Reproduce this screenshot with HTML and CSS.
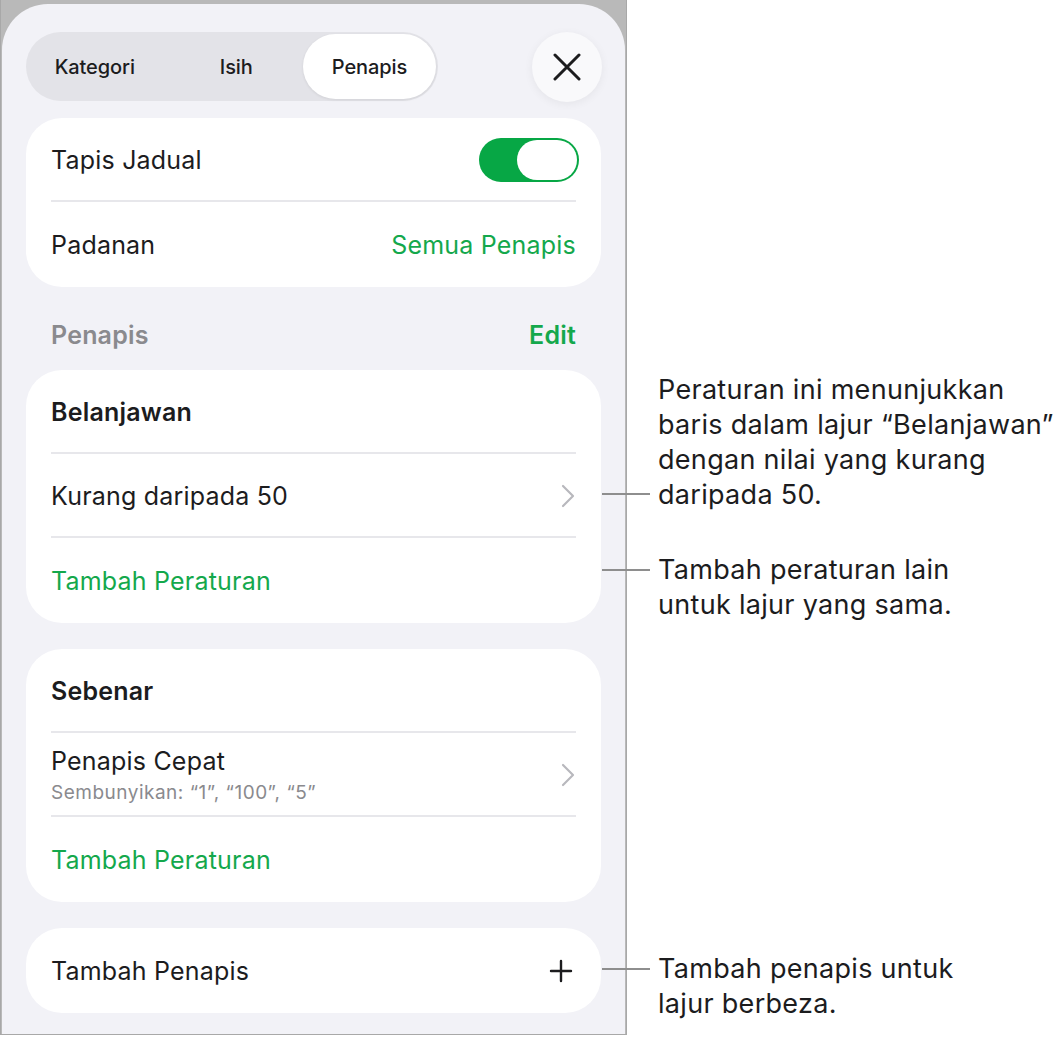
FILE: index.html
```html
<!DOCTYPE html>
<html lang="ms">
<head>
    <meta charset="UTF-8">
    <meta name="viewport" content="width=device-width, initial-scale=1.0">
    <title>Penapis</title>
    <link rel="stylesheet" href="styles.css">
</head>
<body>
    <div class="page">
        <div class="frame">
            <div class="sheet">
                <div class="top-bar">
                    <div class="segmented">
                        <span class="segment">Kategori</span>
                        <span class="segment">Isih</span>
                        <span class="segment selected">Penapis</span>
                    </div>
                    <button class="close-btn" aria-label="Tutup">
                        <svg width="28" height="28" viewBox="0 0 28 28">
                            <path d="M2 2 L26 26 M26 2 L2 26" stroke="#1c1c1e" stroke-width="3" stroke-linecap="round" fill="none"/>
                        </svg>
                    </button>
                </div>

                <div class="card">
                    <div class="row">
                        <span class="label">Tapis Jadual</span>
                        <span class="toggle"><span class="knob"></span></span>
                    </div>
                    <div class="row">
                        <span class="label">Padanan</span>
                        <span class="link">Semua Penapis</span>
                    </div>
                </div>

                <div class="section-head">
                    <span>Penapis</span>
                    <span class="edit">Edit</span>
                </div>

                <div class="card">
                    <div class="row">
                        <span class="label strong">Belanjawan</span>
                    </div>
                    <div class="row">
                        <span class="label">Kurang daripada 50</span>
                        <svg class="chevron" width="14" height="24" viewBox="0 0 14 24">
                            <path d="M2 2 L12 12 L2 22" stroke="#b8b8bd" stroke-width="2.2" stroke-linecap="round" stroke-linejoin="round" fill="none"/>
                        </svg>
                        <div class="callout callout-rule">
                            <span class="callout-line"></span>
                            <p>Peraturan ini menunjukkan<br>baris dalam lajur “Belanjawan”<br>dengan nilai yang kurang<br>daripada 50.</p>
                        </div>
                    </div>
                    <div class="row">
                        <span class="link">Tambah Peraturan</span>
                        <div class="callout callout-add">
                            <span class="callout-line"></span>
                            <p>Tambah peraturan lain<br>untuk lajur yang sama.</p>
                        </div>
                    </div>
                </div>

                <div class="card">
                    <div class="row">
                        <span class="label strong">Sebenar</span>
                    </div>
                    <div class="row">
                        <div class="stack">
                            <span class="label">Penapis Cepat</span>
                            <span class="sub">Sembunyikan: “1”, “100”, “5”</span>
                        </div>
                        <svg class="chevron" width="14" height="24" viewBox="0 0 14 24">
                            <path d="M2 2 L12 12 L2 22" stroke="#b8b8bd" stroke-width="2.2" stroke-linecap="round" stroke-linejoin="round" fill="none"/>
                        </svg>
                    </div>
                    <div class="row">
                        <span class="link">Tambah Peraturan</span>
                    </div>
                </div>

                <div class="card">
                    <div class="row">
                        <span class="label">Tambah Penapis</span>
                        <svg class="plus" width="24" height="24" viewBox="0 0 24 24">
                            <path d="M12 2 V22 M2 12 H22" stroke="#1c1c1e" stroke-width="2.4" stroke-linecap="round" fill="none"/>
                        </svg>
                        <div class="callout callout-new">
                            <span class="callout-line"></span>
                            <p>Tambah penapis untuk<br>lajur berbeza.</p>
                        </div>
                    </div>
                </div>
            </div>
        </div>
    </div>
</body>
</html>
```

FILE: styles.css
```css
html, body {
    margin: 0;
    background: white;
}
body {
    font-family: Inter, "Noto Sans", sans-serif;
    color: #1c1c1e;
}
.page {
    width: 1064px;
    height: 1037px;
    overflow: hidden;
}
.frame {
    width: 623px;
    height: 1030px;
    padding: 4px 1px 0 1px;
    background: #b9b9b9;
    border: 1px solid #a8a8a8;
    border-top: none;
}
.sheet {
    height: 100%;
    box-sizing: border-box;
    background: #f2f2f7;
    border-radius: 46px 46px 0 0;
    padding: 28px 24px 0 24px;
}
.top-bar {
    display: flex;
    justify-content: space-between;
    align-items: center;
    height: 69px;
    margin-bottom: 17px;
    margin-right: -1px;
}
.segmented {
    display: flex;
    align-items: center;
    width: 412px;
    height: 69px;
    box-sizing: border-box;
    padding: 2px;
    border-radius: 35px;
    background: #e3e3e8;
}
.segment {
    flex: 1;
    height: 65px;
    display: flex;
    align-items: center;
    justify-content: center;
    font-size: 20px;
    font-weight: 500;
    letter-spacing: -0.1px;
}
.segment:first-child {
    padding-right: 8px;
}
.segment.selected {
    flex: 0 0 133px;
    background: white;
    border-radius: 33px;
    box-shadow: 0 1px 3px rgba(0,0,0,0.08);
}
.close-btn {
    width: 70px;
    height: 70px;
    border: none;
    border-radius: 50%;
    background: #f9f9fb;
    box-shadow: 0 2px 10px rgba(0,0,0,0.06);
    display: flex;
    align-items: center;
    justify-content: center;
    padding: 0;
}
.card {
    background: white;
    border-radius: 36px;
    padding: 0 25px 1px 25px;
    margin-bottom: 26px;
}
.row {
    position: relative;
    display: flex;
    align-items: center;
    justify-content: space-between;
    height: 84px;
    box-sizing: border-box;
    padding-top: 2px;
    border-bottom: 2px solid #e7e7eb;
    font-size: 25px;
    letter-spacing: 0.2px;
}
.row:last-child {
    border-bottom: none;
}
.strong {
    font-weight: 600;
}
.link {
    color: #14a84c;
}
.stack {
    display: flex;
    flex-direction: column;
}
.sub {
    font-size: 19px;
    color: #8a8a8e;
    margin-top: 5px;
    letter-spacing: 0.5px;
}
.chevron {
    margin-right: 1px;
}
.plus {
    margin-right: 3px;
}
.toggle {
    width: 100px;
    height: 44px;
    border-radius: 22px;
    background: #07a745;
    box-sizing: border-box;
    padding: 2px;
    display: flex;
    justify-content: flex-end;
    margin-right: -3px;
}
.knob {
    width: 60px;
    height: 40px;
    border-radius: 20px;
    background: white;
}
.section-head {
    display: flex;
    justify-content: space-between;
    align-items: center;
    height: 70px;
    margin-top: -13px;
    padding: 0 25px;
    font-size: 25px;
    font-weight: 600;
    color: #8a8a8e;
    letter-spacing: 0.2px;
}
.section-head .edit {
    color: #14a84c;
}

/* annotations hanging off the right edge of a row */
.callout {
    position: absolute;
    left: calc(100% + 26px);
    display: flex;
    align-items: flex-start;
    white-space: nowrap;
}
.callout p {
    margin: 0;
    font-size: 27px;
    line-height: 35px;
    letter-spacing: 0.3px;
    color: #1c1c1e;
}
.callout-line {
    flex: 0 0 48px;
    height: 2px;
    background: #8e8e8e;
    margin-right: 8px;
}
.callout-rule {
    top: -82px;
    align-items: flex-end;
}
.callout-rule .callout-line {
    margin-bottom: 17px;
}
.callout-add {
    top: 14px;
}
.callout-add .callout-line {
    margin-top: 17px;
}
.callout-new {
    top: 23px;
}
.callout-new .callout-line {
    margin-top: 17px;
}
```
